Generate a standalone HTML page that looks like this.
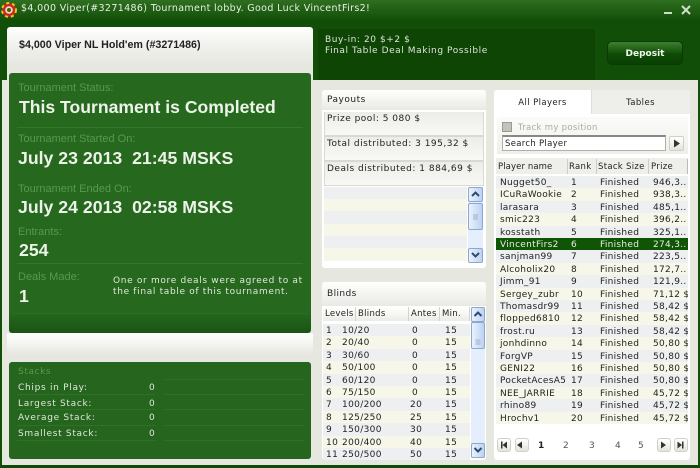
<!DOCTYPE html>
<html><head><meta charset="utf-8">
<style>
*{box-sizing:border-box;margin:0;padding:0}
html,body{width:700px;height:468px;overflow:hidden;background:#e6e8df}
#r{position:relative;width:700px;height:468px;overflow:hidden;font-family:"DejaVu Sans",sans-serif;font-size:9px;color:#222;background:#e6e8df}
#r div{position:absolute}
.t{white-space:nowrap;line-height:12px}
.b{font-family:"Liberation Sans",sans-serif;font-weight:bold;color:#eef3ea;white-space:nowrap}
.l{font-family:"Liberation Sans",sans-serif;font-size:11px;color:#579a4c;white-space:nowrap;line-height:12px}
.w{color:#dfe8da}
.hr{height:1px;background:#2f7a28}
.row{height:12.4px;left:0;line-height:15px}
.hd{background:linear-gradient(#fff,#ecece6);border-right:1px solid #d4d4cc;top:0;height:14px;line-height:15px;padding-left:2px;font-size:8.5px;letter-spacing:.3px}
.sb{border:1px solid #8ea8cc;border-radius:2px;background:linear-gradient(90deg,#eaf2fd,#bcd2f2);}
.pg{width:14px;height:14px;background:linear-gradient(#fff,#e4e4dc);border:1px solid #d0d0c8;border-radius:3px;top:438px}
</style></head><body><div id="r">

<!-- title bar and header -->
<div style="left:0;top:0;width:700px;height:20px;background:linear-gradient(#2f6f20,#125008)"></div>
<div style="left:0;top:20px;width:700px;height:60px;background:#114f08"></div>
<div style="left:318px;top:29px;width:277px;height:51px;background:#0e4505"></div>
<svg style="position:absolute;left:1px;top:2px" width="16" height="16" viewBox="0 0 16 16"><circle cx="8" cy="8" r="7" fill="#c8281c"/><circle cx="8" cy="8" r="7" fill="none" stroke="#e8c820" stroke-width="2" stroke-dasharray="3 3"/><circle cx="8" cy="8" r="3.8" fill="#e8e0c0"/><circle cx="8" cy="8" r="2" fill="#4a5a20"/></svg>
<div class="t" style="left:21px;top:3px;color:#e6efe2;font-size:9.5px;letter-spacing:.35px">$4,000 Viper(#3271486) Tournament lobby. Good Luck VincentFirs2!</div>
<div style="left:664px;top:12px;width:8px;height:2px;background:#cfdcc9"></div>
<svg style="position:absolute;left:681px;top:5px" width="10" height="10" viewBox="0 0 10 10"><path d="M1 1L9 9M9 1L1 9" stroke="#d3dfcd" stroke-width="2"/></svg>

<!-- frame edges -->
<div style="left:0;top:465px;width:700px;height:3px;background:#0f4a08"></div>
<div style="left:0;top:80px;width:2px;height:388px;background:#125008"></div>
<div style="left:698px;top:80px;width:2px;height:388px;background:#125008"></div>

<!-- left cards -->
<div style="left:7px;top:27px;width:306px;height:46px;background:linear-gradient(#fff 0,#f0f0ec 20px,#e6e7e0 40px);border-radius:3px 3px 0 0"></div>
<div style="left:7px;top:73px;width:306px;height:262px;background:#e6e7e0"></div>
<div style="left:7px;top:333px;width:306px;height:131px;background:linear-gradient(#fff 0,#f0f0ec 14px,#e6e7e0 22px)"></div>
<div class="t" style="left:19px;top:39px;font-family:'Liberation Sans',sans-serif;font-weight:bold;font-size:10.7px;color:#222">$4,000 Viper NL Hold'em (#3271486)</div>

<!-- buy-in -->
<div class="t" style="left:325px;top:34px;color:#dbe6d5;font-size:9px;letter-spacing:.57px">Buy-in: 20 $+2 $</div>
<div class="t" style="left:325px;top:45px;color:#dbe6d5;font-size:9px;letter-spacing:.57px">Final Table Deal Making Possible</div>
<div style="left:607px;top:41px;width:76px;height:24px;border-radius:5px;background:linear-gradient(#3d8030,#0d4c05 55%,#0a3f03);border:1px solid #0b3a04"></div>
<div class="t" style="left:607px;top:48px;width:76px;text-align:center;color:#f2f6f0;font-weight:bold;font-size:9px">Deposit</div>

<!-- status panel -->
<div style="left:9px;top:73px;width:302px;height:260px;background:linear-gradient(#26681e 0,#26681e 92%,#1a5513 100%);border-radius:3px"></div>
<div class="l" style="left:18px;top:82px">Tournament Status:</div>
<div class="b" style="left:19px;top:97px;font-size:17.6px;line-height:21px">This Tournament is Completed</div>
<div class="hr" style="left:17px;top:127px;width:286px"></div>
<div class="l" style="left:18px;top:133px">Tournament Started On:</div>
<div class="b" style="left:18px;top:148px;font-size:17.7px;line-height:21px;white-space:pre">July 23 2013  21:45 MSKS</div>
<div class="l" style="left:18px;top:183px">Tournament Ended On:</div>
<div class="b" style="left:18px;top:197px;font-size:17.7px;line-height:21px;white-space:pre">July 24 2013  02:58 MSKS</div>
<div class="l" style="left:18px;top:226px">Entrants:</div>
<div class="b" style="left:19px;top:240px;font-size:17.7px;line-height:21px">254</div>
<div class="hr" style="left:17px;top:263px;width:286px"></div>
<div class="l" style="left:18px;top:271px">Deals Made:</div>
<div class="b" style="left:19px;top:286px;font-size:17.7px;line-height:21px">1</div>
<div class="t w" style="left:113px;top:275px;letter-spacing:.67px">One or more deals were agreed to at</div>
<div class="t w" style="left:113px;top:286px;letter-spacing:.67px">the final table of this tournament.</div>
<div class="hr" style="left:12px;top:313px;width:296px;background:#2a7023"></div>

<!-- stacks -->
<div style="left:9px;top:362px;width:302px;height:97px;background:#25651d;border-radius:3px"></div>
<div class="t" style="left:18px;top:366px;color:#579a4c;letter-spacing:.6px">Stacks</div>
<div class="t w" style="left:18px;top:382px;letter-spacing:.7px">Chips in Play:</div><div class="t w" style="left:149px;top:382px">0</div>
<div class="t w" style="left:18px;top:398px;letter-spacing:.7px">Largest Stack:</div><div class="t w" style="left:149px;top:398px">0</div>
<div class="t w" style="left:18px;top:412px;letter-spacing:.7px">Average Stack:</div><div class="t w" style="left:149px;top:412px">0</div>
<div class="t w" style="left:18px;top:428px;letter-spacing:.7px">Smallest Stack:</div><div class="t w" style="left:149px;top:428px">0</div>
<div class="hr" style="left:17px;top:394px;width:138px;background:#2d7226"></div>
<div class="hr" style="left:17px;top:409px;width:138px;background:#2d7226"></div>
<div class="hr" style="left:17px;top:425px;width:138px;background:#2d7226"></div>
<div class="hr" style="left:17px;top:440px;width:138px;background:#2d7226"></div>
<div class="hr" style="left:165px;top:379px;width:139px;background:#2d7226"></div>
<div class="hr" style="left:165px;top:394px;width:139px;background:#2d7226"></div>
<div class="hr" style="left:165px;top:409px;width:139px;background:#2d7226"></div>
<div class="hr" style="left:165px;top:425px;width:139px;background:#2d7226"></div>
<div class="hr" style="left:165px;top:440px;width:139px;background:#2d7226"></div>

<!-- payouts -->
<div style="left:322px;top:90px;width:164px;height:178px;background:#fff;border-radius:3px"></div>
<div style="left:322px;top:90px;width:164px;height:20px;background:linear-gradient(#fff,#e9e9e4);border-radius:3px 3px 0 0"></div>
<div class="t" style="left:327px;top:94px;font-size:9px;letter-spacing:.5px">Payouts</div>
<div style="left:324px;top:112px;width:160px;height:74px;background:#d9d9d2"></div>
<div style="left:325px;top:112px;width:158px;height:23px;background:linear-gradient(#ecece8,#f8f8f5)"></div>
<div style="left:325px;top:137px;width:158px;height:23px;background:linear-gradient(#ecece8,#f8f8f5)"></div>
<div style="left:325px;top:162px;width:158px;height:23px;background:linear-gradient(#ecece8,#f8f8f5)"></div>
<div class="t" style="left:327px;top:113px;letter-spacing:.5px">Prize pool: 5 080 $</div>
<div class="t" style="left:327px;top:138px;letter-spacing:.5px">Total distributed: 3 195,32 $</div>
<div class="t" style="left:327px;top:163px;letter-spacing:.5px">Deals distributed: 1 884,69 $</div>
<div style="left:324px;top:187px;width:143px;height:12px;background:#eeeff0"></div>
<div style="left:324px;top:199px;width:143px;height:12px;background:#f6f7e8"></div>
<div style="left:324px;top:211px;width:143px;height:13px;background:#eeeff0"></div>
<div style="left:324px;top:224px;width:143px;height:12px;background:#f6f7e8"></div>
<div style="left:324px;top:236px;width:143px;height:12px;background:#eeeff0"></div>
<div style="left:324px;top:248px;width:143px;height:13px;background:#f6f7e8"></div>
<div style="left:468px;top:187px;width:15px;height:75px;background:#e4eefc"></div>
<div class="sb" style="left:468px;top:187px;width:15px;height:15px"></div>
<div class="sb" style="left:468px;top:203px;width:15px;height:27px"></div>
<div class="sb" style="left:468px;top:248px;width:15px;height:15px"></div>
<svg style="position:absolute;left:468px;top:187px" width="15" height="76" viewBox="0 0 15 76"><path d="M4 9L7.500 5.500L11 9" fill="none" stroke="#2d4a70" stroke-width="2"/><path d="M4 66L7.500 69.500L11 66" fill="none" stroke="#2d4a70" stroke-width="2"/><path d="M5 28h5M5 30h5M5 32h5" stroke="#9fb0c6"/></svg>

<!-- blinds -->
<div style="left:322px;top:282px;width:164px;height:178px;background:#fff;border-radius:3px"></div>
<div style="left:322px;top:282px;width:164px;height:24px;background:linear-gradient(#fff,#e9e9e4);border-radius:3px 3px 0 0"></div>
<div class="t" style="left:327px;top:288px;letter-spacing:.4px">Blinds</div>
<div style="left:323px;top:307px;width:147px;height:14px">
<div class="hd" style="left:0;width:33px">Levels</div><div class="hd" style="left:33px;width:53px">Blinds</div><div class="hd" style="left:86px;width:31px">Antes</div><div class="hd" style="left:117px;width:30px">Min.</div></div>
<div style="left:323px;top:324px;width:147px;height:136px;overflow:hidden;font-size:9px;letter-spacing:.35px" id="bl">
<div class="row t" style="top:0;width:147px;background:#eeeff0"><span style="position:absolute;left:3px">1</span><span style="position:absolute;left:19px">10/20</span><span style="position:absolute;left:89px">0</span><span style="position:absolute;left:122px">15</span></div>
<div class="row t" style="top:12.4px;width:147px;background:#f6f7e8"><span style="position:absolute;left:3px">2</span><span style="position:absolute;left:19px">20/40</span><span style="position:absolute;left:89px">0</span><span style="position:absolute;left:122px">15</span></div>
<div class="row t" style="top:24.8px;width:147px;background:#eeeff0"><span style="position:absolute;left:3px">3</span><span style="position:absolute;left:19px">30/60</span><span style="position:absolute;left:89px">0</span><span style="position:absolute;left:122px">15</span></div>
<div class="row t" style="top:37.2px;width:147px;background:#f6f7e8"><span style="position:absolute;left:3px">4</span><span style="position:absolute;left:19px">50/100</span><span style="position:absolute;left:89px">0</span><span style="position:absolute;left:122px">15</span></div>
<div class="row t" style="top:49.6px;width:147px;background:#eeeff0"><span style="position:absolute;left:3px">5</span><span style="position:absolute;left:19px">60/120</span><span style="position:absolute;left:89px">0</span><span style="position:absolute;left:122px">15</span></div>
<div class="row t" style="top:62px;width:147px;background:#f6f7e8"><span style="position:absolute;left:3px">6</span><span style="position:absolute;left:19px">75/150</span><span style="position:absolute;left:89px">0</span><span style="position:absolute;left:122px">15</span></div>
<div class="row t" style="top:74.4px;width:147px;background:#eeeff0"><span style="position:absolute;left:3px">7</span><span style="position:absolute;left:19px">100/200</span><span style="position:absolute;left:87px">20</span><span style="position:absolute;left:122px">15</span></div>
<div class="row t" style="top:86.8px;width:147px;background:#f6f7e8"><span style="position:absolute;left:3px">8</span><span style="position:absolute;left:19px">125/250</span><span style="position:absolute;left:87px">25</span><span style="position:absolute;left:122px">15</span></div>
<div class="row t" style="top:99.2px;width:147px;background:#eeeff0"><span style="position:absolute;left:3px">9</span><span style="position:absolute;left:19px">150/300</span><span style="position:absolute;left:87px">30</span><span style="position:absolute;left:122px">15</span></div>
<div class="row t" style="top:111.6px;width:147px;background:#f6f7e8"><span style="position:absolute;left:3px">10</span><span style="position:absolute;left:19px">200/400</span><span style="position:absolute;left:87px">40</span><span style="position:absolute;left:122px">15</span></div>
<div class="row t" style="top:124px;width:147px;background:#eeeff0"><span style="position:absolute;left:3px">11</span><span style="position:absolute;left:19px">250/500</span><span style="position:absolute;left:87px">50</span><span style="position:absolute;left:122px">15</span></div>
</div>
<div style="left:471px;top:307px;width:14px;height:151px;background:#e4eefc"></div>
<div class="sb" style="left:471px;top:307px;width:14px;height:15px"></div>
<div class="sb" style="left:471px;top:322px;width:14px;height:27px"></div>
<div class="sb" style="left:471px;top:443px;width:14px;height:15px"></div>
<svg style="position:absolute;left:471px;top:307px" width="14" height="151" viewBox="0 0 14 151"><path d="M3.500 9L7 5.500L10.500 9" fill="none" stroke="#2d4a70" stroke-width="2"/><path d="M3.500 141L7 144.500L10.500 141" fill="none" stroke="#2d4a70" stroke-width="2"/><path d="M4.500 33h5M4.500 35h5M4.500 37h5" stroke="#9fb0c6"/></svg>

<!-- players -->
<div style="left:494px;top:90px;width:196px;height:370px;background:#fff;border-radius:3px"></div>
<div style="left:591px;top:90px;width:99px;height:24px;background:#eeeeea;border-radius:0 3px 0 0;border-left:1px solid #ddd"></div>
<div class="t" style="left:494px;top:97px;width:97px;text-align:center;font-size:8.5px;letter-spacing:.4px">All Players</div>
<div class="t" style="left:591px;top:97px;width:99px;text-align:center;font-size:8.5px;letter-spacing:.4px">Tables</div>
<div style="left:497px;top:117px;width:191px;height:37px;background:linear-gradient(#fbfbf9,#efefea)"></div>
<div style="left:502px;top:122px;width:10px;height:10px;background:#c4c2ba;border:1px solid #9b9a92"></div>
<div class="t" style="left:518px;top:122px;color:#aaa;letter-spacing:.3px;font-size:8.5px">Track my position</div>
<div style="left:502px;top:135px;width:164px;height:16px;background:#fff;border:1px solid #b0b0a8;border-top:2px solid #888"></div>
<div class="t" style="left:505px;top:138px;letter-spacing:.3px;font-size:8.5px">Search Player</div>
<div style="left:669px;top:136px;width:15px;height:15px;background:linear-gradient(#fff,#e4e4dc);border:1px solid #d0d0c8;border-radius:2px"></div>
<svg style="position:absolute;left:673px;top:139px" width="8" height="9"><path d="M1 0.500L7 4.500L1 8.500Z" fill="#333"/></svg>

<div style="left:496px;top:158px;width:192px;height:16px;background:#efefea"></div>
<div class="t" style="left:498px;top:161px;font-size:8.5px;letter-spacing:.1px">Player name</div>
<div class="t" style="left:569px;top:161px;font-size:8.5px;letter-spacing:.3px">Rank</div>
<div class="t" style="left:598px;top:161px;font-size:8.5px;letter-spacing:.3px">Stack Size</div>
<div class="t" style="left:651px;top:161px;font-size:8.5px;letter-spacing:.3px">Prize</div>
<div style="left:567px;top:159px;width:1px;height:15px;background:#ccc"></div>
<div style="left:596px;top:159px;width:1px;height:15px;background:#ccc"></div>
<div style="left:648px;top:159px;width:1px;height:15px;background:#ccc"></div>
<div style="left:687px;top:159px;width:1px;height:15px;background:#bbb"></div>

<div style="left:496px;top:176px;width:192px;height:249px;overflow:hidden;letter-spacing:.3px">
<div class="row t" style="top:0;width:192px;background:#eeeff0"><span style="position:absolute;left:4px">Nugget50_</span><span style="position:absolute;left:75px">1</span><span style="position:absolute;left:104px">Finished</span><span style="position:absolute;left:157px">946,3..</span></div>
<div class="row t" style="top:12.4px;width:192px;background:#f6f7e8"><span style="position:absolute;left:4px;width:66px;overflow:hidden">ICuRaWookie</span><span style="position:absolute;left:75px">2</span><span style="position:absolute;left:104px">Finished</span><span style="position:absolute;left:157px">938,3..</span></div>
<div class="row t" style="top:24.8px;width:192px;background:#eeeff0"><span style="position:absolute;left:4px">larasara</span><span style="position:absolute;left:75px">3</span><span style="position:absolute;left:104px">Finished</span><span style="position:absolute;left:157px">485,1..</span></div>
<div class="row t" style="top:37.2px;width:192px;background:#f6f7e8"><span style="position:absolute;left:4px">smic223</span><span style="position:absolute;left:75px">4</span><span style="position:absolute;left:104px">Finished</span><span style="position:absolute;left:157px">396,2..</span></div>
<div class="row t" style="top:49.6px;width:192px;background:#eeeff0"><span style="position:absolute;left:4px">kosstath</span><span style="position:absolute;left:75px">5</span><span style="position:absolute;left:104px">Finished</span><span style="position:absolute;left:157px">325,1..</span></div>
<div class="row t" style="top:62px;width:192px;background:#0f5505;color:#e6efe2"><span style="position:absolute;left:4px">VincentFirs2</span><span style="position:absolute;left:75px">6</span><span style="position:absolute;left:104px">Finished</span><span style="position:absolute;left:157px">274,3..</span></div>
<div class="row t" style="top:74.4px;width:192px;background:#eeeff0"><span style="position:absolute;left:4px">sanjman99</span><span style="position:absolute;left:75px">7</span><span style="position:absolute;left:104px">Finished</span><span style="position:absolute;left:157px">223,5..</span></div>
<div class="row t" style="top:86.8px;width:192px;background:#f6f7e8"><span style="position:absolute;left:4px">Alcoholix20</span><span style="position:absolute;left:75px">8</span><span style="position:absolute;left:104px">Finished</span><span style="position:absolute;left:157px">172,7..</span></div>
<div class="row t" style="top:99.2px;width:192px;background:#eeeff0"><span style="position:absolute;left:4px">Jimm_91</span><span style="position:absolute;left:75px">9</span><span style="position:absolute;left:104px">Finished</span><span style="position:absolute;left:157px">121,9..</span></div>
<div class="row t" style="top:111.6px;width:192px;background:#f6f7e8"><span style="position:absolute;left:4px">Sergey_zubr</span><span style="position:absolute;left:75px">10</span><span style="position:absolute;left:104px">Finished</span><span style="position:absolute;left:157px">71,12 $</span></div>
<div class="row t" style="top:124px;width:192px;background:#eeeff0"><span style="position:absolute;left:4px">Thomasdr99</span><span style="position:absolute;left:75px">11</span><span style="position:absolute;left:104px">Finished</span><span style="position:absolute;left:157px">58,42 $</span></div>
<div class="row t" style="top:136.4px;width:192px;background:#f6f7e8"><span style="position:absolute;left:4px">flopped6810</span><span style="position:absolute;left:75px">12</span><span style="position:absolute;left:104px">Finished</span><span style="position:absolute;left:157px">58,42 $</span></div>
<div class="row t" style="top:148.8px;width:192px;background:#eeeff0"><span style="position:absolute;left:4px">frost.ru</span><span style="position:absolute;left:75px">13</span><span style="position:absolute;left:104px">Finished</span><span style="position:absolute;left:157px">58,42 $</span></div>
<div class="row t" style="top:161.2px;width:192px;background:#f6f7e8"><span style="position:absolute;left:4px">jonhdinno</span><span style="position:absolute;left:75px">14</span><span style="position:absolute;left:104px">Finished</span><span style="position:absolute;left:157px">50,80 $</span></div>
<div class="row t" style="top:173.6px;width:192px;background:#eeeff0"><span style="position:absolute;left:4px">ForgVP</span><span style="position:absolute;left:75px">15</span><span style="position:absolute;left:104px">Finished</span><span style="position:absolute;left:157px">50,80 $</span></div>
<div class="row t" style="top:186px;width:192px;background:#f6f7e8"><span style="position:absolute;left:4px">GENI22</span><span style="position:absolute;left:75px">16</span><span style="position:absolute;left:104px">Finished</span><span style="position:absolute;left:157px">50,80 $</span></div>
<div class="row t" style="top:198.4px;width:192px;background:#eeeff0"><span style="position:absolute;left:4px;width:66px;overflow:hidden">PocketAcesA5</span><span style="position:absolute;left:75px">17</span><span style="position:absolute;left:104px">Finished</span><span style="position:absolute;left:157px">50,80 $</span></div>
<div class="row t" style="top:210.8px;width:192px;background:#f6f7e8"><span style="position:absolute;left:4px">NEE_JARRIE</span><span style="position:absolute;left:75px">18</span><span style="position:absolute;left:104px">Finished</span><span style="position:absolute;left:157px">45,72 $</span></div>
<div class="row t" style="top:223.2px;width:192px;background:#eeeff0"><span style="position:absolute;left:4px">rhino89</span><span style="position:absolute;left:75px">19</span><span style="position:absolute;left:104px">Finished</span><span style="position:absolute;left:157px">45,72 $</span></div>
<div class="row t" style="top:235.6px;width:192px;background:#f6f7e8"><span style="position:absolute;left:4px">Hrochv1</span><span style="position:absolute;left:75px">20</span><span style="position:absolute;left:104px">Finished</span><span style="position:absolute;left:157px">45,72 $</span></div>
</div>

<!-- pagination -->
<div class="pg" style="left:497px"></div>
<div class="pg" style="left:515px"></div>
<div class="pg" style="left:657px"></div>
<div class="pg" style="left:674px"></div>
<svg style="position:absolute;left:497px;top:438px" width="192" height="14" viewBox="0 0 192 14"><path d="M4 3.500v7h1.500v-7ZM5.500 7L10 3.500v7Z" fill="#333"/><path d="M20 7L25 3.500v7Z" fill="#333"/><path d="M164 3.500v7l5-3.500Z" fill="#333"/><path d="M180.500 3.500v7L185 7ZM185 3.500v7h1.500v-7Z" fill="#333"/></svg>
<div class="t" style="left:538px;top:440px;font-weight:bold;font-size:9px">1</div>
<div class="t" style="left:563px;top:440px;color:#555">2</div>
<div class="t" style="left:589px;top:440px;color:#555">3</div>
<div class="t" style="left:615px;top:440px;color:#555">4</div>
<div class="t" style="left:638px;top:440px;color:#555">5</div>
</div></body></html>
